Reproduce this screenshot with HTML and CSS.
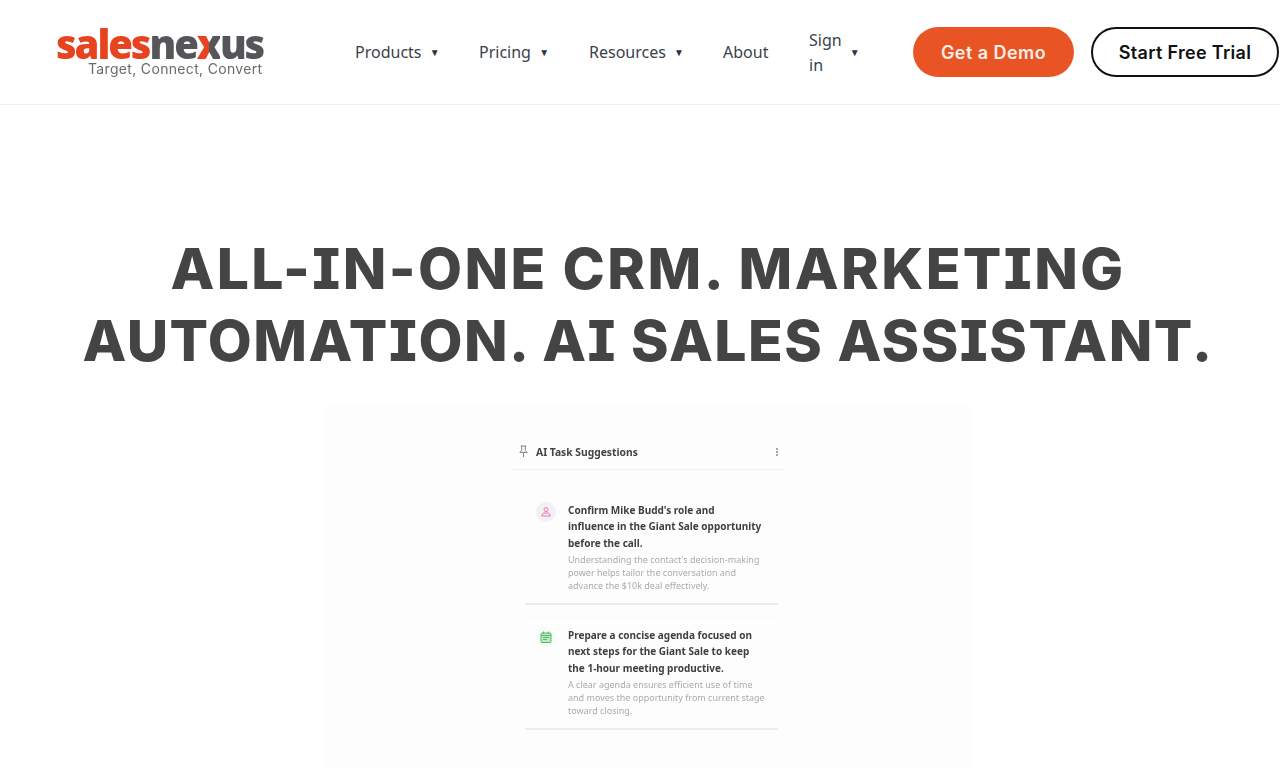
FILE: index.html
```html
<!DOCTYPE html>
<html lang="en">
<head>
<meta charset="utf-8">
<title>SalesNexus</title>
<link rel="stylesheet" href="styles.css">
</head>
<body>
<header class="site-header">
  <a class="logo" href="#">
    <span class="logo-word"><span class="red">sales</span><span class="grey">ne</span><span class="split">x</span><span class="grey">us</span></span>
    <span class="logo-tag">Target, Connect, Convert</span>
  </a>
  <nav class="nav">
    <a class="nav-item nav-products" href="#">Products <i class="caret">▼</i></a>
    <a class="nav-item nav-pricing" href="#">Pricing <i class="caret">▼</i></a>
    <a class="nav-item nav-resources" href="#">Resources <i class="caret">▼</i></a>
    <a class="nav-item nav-about" href="#">About</a>
    <a class="nav-item nav-sign" href="#"><span class="sign-text">Sign<br>in</span> <i class="caret">▼</i></a>
  </nav>
  <div class="actions">
    <a class="btn btn-demo" href="#">Get a Demo</a>
    <a class="btn btn-trial" href="#">Start Free Trial</a>
  </div>
</header>
<main class="hero">
  <h1 class="headline"><span class="line-one">ALL-IN-ONE CRM. MARKETING</span><br><span class="line-two">AUTOMATION. AI SALES ASSISTANT.</span></h1>
  <figure class="shot">
    <div class="panel">
      <div class="panel-head">
        <svg class="pin" viewBox="0 0 12 14" width="11" height="13" aria-hidden="true"><path d="M3 1h6M4 1v5L2 8h8L8 6V1M6 8v5" fill="none" stroke="#777" stroke-width="1"/></svg>
        <span class="panel-title">AI Task Suggestions</span>
        <span class="dots"><b></b><b></b><b></b></span>
      </div>
      <article class="task task-first">
        <span class="task-icon icon-person">
          <svg viewBox="0 0 12 12" width="12" height="12" aria-hidden="true"><circle cx="6" cy="3.600" r="2" fill="none" stroke="#e878b8"/><path d="M3.500 7h5l2 3H1.500z" fill="none" stroke="#e878b8"/></svg>
        </span>
        <div class="task-body">
          <h3>Confirm Mike Budd's role and<br>influence in the Giant Sale opportunity<br>before the call.</h3>
          <p>Understanding the contact's decision-making<br>power helps tailor the conversation and<br>advance the $10k deal effectively.</p>
        </div>
      </article>
      <article class="task">
        <span class="task-icon icon-cal">
          <svg viewBox="0 0 12 12" width="12" height="12" aria-hidden="true"><rect x="1" y="2" width="10" height="9.500" rx="1" fill="#bfe8c4" stroke="#55b868"/><path d="M3.500 0.500v2.500M8.500 0.500v2.500M1 4.500h10M3 6.500h6M3 8.500h4" fill="none" stroke="#55b868"/></svg>
        </span>
        <div class="task-body">
          <h3>Prepare a concise agenda focused on<br>next steps for the Giant Sale to keep<br>the 1-hour meeting productive.</h3>
          <p>A clear agenda ensures efficient use of time<br>and moves the opportunity from current stage<br>toward closing.</p>
        </div>
      </article>
    </div>
  </figure>
</main>
</body>
</html>
```
FILE: styles.css
```css
* { box-sizing: border-box; }
html, body { margin: 0; height: 768px; overflow: hidden; background: #fff; }
body { font-family: "Noto Sans", sans-serif; color: #333; }
a { text-decoration: none; color: inherit; }

.site-header {
  height: 105px;
  border-bottom: 1px solid #f0f0f0;
  display: flex;
  align-items: center;
  padding: 0 1px 0 56px;
}

.logo { width: 209px; display: flex; flex-direction: column; flex: none; margin-top: 1px; }
.logo-word {
  font: 800 40px/27px "Open Sans", sans-serif;
  letter-spacing: -2.100px;
  white-space: nowrap;
  filter: blur(.4px);
}
.red { color: #e8431f; }
.grey { color: #55565a; }
.split {
  background: linear-gradient(90deg, #e8431f 0 52%, #55565a 52% 100%);
  -webkit-background-clip: text;
  background-clip: text;
  color: transparent;
}
.logo-tag {
  font: 400 14px/14px "Inter", sans-serif;
  color: #6b6b6e;
  padding: 5px 0 0 32px;
  letter-spacing: .33px;
  white-space: nowrap;
  filter: blur(.3px);
}

.nav { display: flex; align-items: center; margin-left: 90px; width: 558px; flex: none; font-size: 16px; color: #3a3f4b; }
.nav-item { display: flex; align-items: center; white-space: pre; line-height: 25px; }
.nav-products { width: 124px; }
.nav-pricing { width: 110px; }
.nav-resources { width: 134px; }
.nav-about { width: 86px; }
.sign-text { display: inline-block; padding-top: 2px; }
.caret { font-style: normal; font-size: 10px; margin-left: 4px; color: #2e3340; }
.nav-sign .caret { margin-left: 8px; }

.actions { display: flex; gap: 17px; }
.btn {
  height: 50px;
  border-radius: 25px;
  display: flex;
  align-items: center;
  justify-content: center;
  font: 600 18px/1 "Inter", sans-serif;
  padding-top: 2px;
  white-space: nowrap;
}
.btn-demo { width: 161px; background: #e95424; color: #fbeee8; letter-spacing: .45px; }
.btn-trial { width: 188px; border: 2px solid #111; color: #111; background: #fff; letter-spacing: .3px; }

.hero { display: flex; flex-direction: column; align-items: center; padding-left: 16px; }
.headline {
  margin: 128px 0 0;
  width: 100%;
  text-align: center;
  font: 800 57px/72px "Inter", sans-serif;
  font-feature-settings: "cv08";
  color: #444;
  white-space: nowrap;
}
.line-one { letter-spacing: 2.400px; }
.line-two { letter-spacing: 1.500px; }
.shot {
  margin: 29px 0 0;
  width: 646px;
  height: 400px;
  background: #fdfdfd;
  display: flex;
  justify-content: center;
  padding-top: 28px;
  font-family: "Noto Sans", sans-serif;
  filter: blur(.3px);
}
.panel { width: 272px; }
.panel-head {
  display: flex;
  align-items: center;
  height: 36px;
  padding: 0 6px;
  border-bottom: 1px solid #f1f1f1;
}
.pin { margin-right: 7px; }
.panel-title { font-weight: 700; font-size: 10.300px; color: #444; flex: 1; }
.dots { display: flex; flex-direction: column; gap: 1px; }
.dots b { width: 2px; height: 2px; background: #888; border-radius: 50%; }

.task {
  margin: 11px 6px 0 13px;
  width: 253px;
  height: 114px;
  display: flex;
  gap: 12px;
  padding: 10px 0 0 11px;
  border-top: 1px solid #fafafa;
  border-bottom: 2px solid #ececec;
}
.task-first { margin-top: 21px; }
.task-icon {
  width: 20px; height: 20px; border-radius: 50%;
  display: flex; align-items: center; justify-content: center; flex: none;
}
.icon-person { background: #f3f1f3; }
.icon-cal { background: #f7fbf7; }
.task-body { flex: 1; white-space: nowrap; }
.task-body h3 { margin: 0; font-size: 10px; line-height: 16.300px; font-weight: 700; color: #3d3f44; }
.task-body p { margin: 0; font-size: 9px; line-height: 13px; color: #a9abb0; padding-top: 2px; }
```
